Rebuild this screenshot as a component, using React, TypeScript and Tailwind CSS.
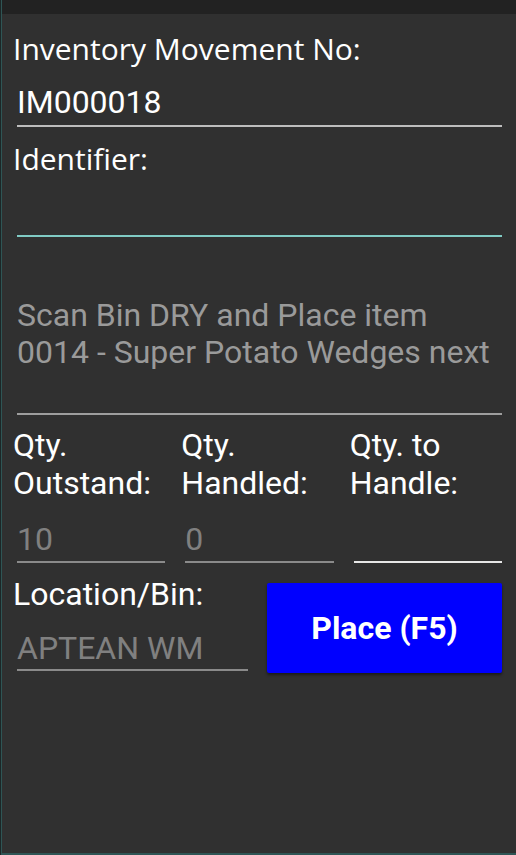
import React from 'react'

const roboto = { fontFamily: 'Roboto, "Liberation Sans", sans-serif' }

function Field({
  value,
  textClass,
  lineClass,
  pt,
  pb,
}: {
  value?: string
  textClass: string
  lineClass: string
  pt: string
  pb: string
}) {
  return (
    <div className={`ml-[4px] ${pt} ${pb} border-b-2 ${lineClass}`}>
      <div className={`h-[36px] text-[32px] leading-[36px] whitespace-nowrap ${textClass}`} style={roboto}>
        {value}
      </div>
    </div>
  )
}

export default function App() {
  return (
    <div className="w-[516px] h-[855px] flex bg-[#303030] overflow-hidden">
      {/* left edge from window behind */}
      <div className="w-px h-full bg-[#1c2626]" />
      <div className="flex-1 flex flex-col border-l border-b-2 border-[#2f5555]">
        {/* status strip */}
        <div className="h-[14px] bg-[#222222] shrink-0" />

        <div className="flex flex-col pl-[11px] pr-[14px]">
          <div
            className="mt-[16px] text-[30px] leading-[37px] text-white whitespace-nowrap"
            style={{ fontFamily: '"Open Sans", "Noto Sans", sans-serif' }}
          >
            Inventory Movement No:
          </div>
          <Field value="IM000018" textClass="text-white" lineClass="border-[#bdbdbd]" pt="pt-[17px]" pb="pb-[5px]" />

          <div
            className="mt-[13px] text-[30px] leading-[37px] text-white whitespace-nowrap"
            style={{ fontFamily: '"Open Sans", "Noto Sans", sans-serif' }}
          >
            Identifier:
          </div>
          <Field textClass="text-white" lineClass="border-[#80cbc4]" pt="pt-[17px]" pb="pb-[5px]" />

          {/* instruction */}
          <div className="mt-[60px] ml-[4px] pb-[42px] border-b-2 border-[#9e9e9e]">
            <div className="text-[32px] leading-[37px] text-[#9a9a9a] whitespace-nowrap" style={roboto}>
              Scan Bin DRY and Place item
              <br />
              0014 - Super Potato Wedges next
            </div>
          </div>

          {/* quantities */}
          <div className="mt-[11px] grid grid-cols-3 gap-x-[16px]">
            <div>
              <div className="text-[32px] leading-[38px] text-white" style={roboto}>
                Qty.
                <br />
                Outstand:
              </div>
              <Field value="10" textClass="text-[#808080]" lineClass="border-[#8a8a8a]" pt="pt-[19px]" pb="pb-[4px]" />
            </div>
            <div>
              <div className="text-[32px] leading-[38px] text-white" style={roboto}>
                Qty.
                <br />
                Handled:
              </div>
              <Field value="0" textClass="text-[#808080]" lineClass="border-[#8a8a8a]" pt="pt-[19px]" pb="pb-[4px]" />
            </div>
            <div>
              <div className="text-[32px] leading-[38px] text-white" style={roboto}>
                Qty. to
                <br />
                Handle:
              </div>
              <Field textClass="text-white" lineClass="border-[#e6e6e6]" pt="pt-[19px]" pb="pb-[4px]" />
            </div>
          </div>

          {/* location + action */}
          <div className="mt-[12px] grid grid-cols-2 gap-x-[19px]">
            <div>
              <div className="text-[32px] leading-[38px] text-white whitespace-nowrap" style={roboto}>
                Location/Bin:
              </div>
              <Field value="APTEAN WM" textClass="text-[#808080]" lineClass="border-[#8a8a8a]" pt="pt-[17px]" pb="pb-[3px]" />
            </div>
            <div className="pt-[8px]">
              <button
                className="w-full h-[90px] rounded-[2px] bg-[#0000ff] text-white font-bold text-[32px] shadow-[0_2px_3px_rgba(0,0,0,0.45)]"
                style={roboto}
              >
                Place (F5)
              </button>
            </div>
          </div>
        </div>
      </div>
    </div>
  )
}
